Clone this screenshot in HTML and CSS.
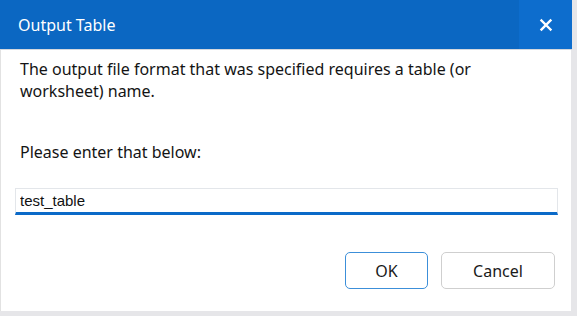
FILE: index.html
```html
<!DOCTYPE html>
<html lang="en">
<head>
  <meta charset="UTF-8" />
  <title>Output Table</title>
  <link rel="stylesheet" href="styles.css">
</head>
<body>
  <div class="dialog">
    <div class="titlebar">
      <span class="title">Output Table</span>
      <a class="close" title="Close">
        <svg width="14" height="14" viewBox="0 0 14 14">
          <path d="M2.5 2.5 L11.5 11.5 M11.5 2.5 L2.5 11.5" stroke="#fff" stroke-width="2.4" stroke-linecap="square" />
        </svg>
      </a>
    </div>
    <div class="content">
      <p class="msg">The output file format that was specified requires a table (or worksheet) name.</p>
      <p class="msg prompt">Please enter that below:</p>
      <input class="name-input" type="text" value="test_table">
      <div class="buttons">
        <button class="btn default">OK</button>
        <button class="btn cancel">Cancel</button>
      </div>
    </div>
  </div>
</body>
</html>
```

FILE: styles.css
```css
html, body {
  margin: 0;
  padding: 0;
  background: #e6e6e9;
  font-family: 'Noto Sans', 'Open Sans', sans-serif;
  color: #1a1a1a;
}
.dialog {
  width: 571px;
  height: 311px;
  background: #fff;
  border-left: 1px solid #e2e2e2;
  box-sizing: border-box;
  display: flex;
  flex-direction: column;
}
.titlebar {
  height: 49px;
  background: #0b67c2;
  display: flex;
  align-items: stretch;
  border-bottom: 1px solid #d4d8de;
  margin-left: -1px;
  width: 572px;
}
.title {
  flex: 1;
  color: #fff;
  font-size: 16px;
  padding-left: 18px;
  display: flex;
  align-items: center;
}
.close {
  width: 53px;
  background: #0d6dcd;
  display: flex;
  align-items: center;
  justify-content: center;
}
.content {
  padding: 8px 14px 0 14px;
  display: flex;
  flex-direction: column;
}
.msg {
  margin: 0;
  padding-left: 5px;
  padding-right: 40px;
  font-size: 16px;
  line-height: 22px;
  color: #141414;
}
.prompt {
  margin-top: 39px;
}
.name-input {
  margin-top: 25px;
  width: 543px;
  height: 27px;
  box-sizing: border-box;
  border: 1px solid #e3e6ea;
  border-bottom: 3px solid #0b6ac8;
  padding: 0 4px;
  font-family: 'Liberation Sans', Arial, sans-serif;
  font-size: 15px;
  color: #111;
  outline: none;
}
.buttons {
  margin-top: 37px;
  display: flex;
  justify-content: flex-end;
  gap: 13px;
  padding-right: 2px;
}
.btn {
  height: 37px;
  background: #fff;
  border: 1px solid #cfcfcf;
  border-radius: 5px;
  font-family: 'Noto Sans', 'Open Sans', sans-serif;
  font-size: 16px;
  color: #1a1a1a;
}
.btn.default {
  width: 83px;
  border-color: #3c8fd9;
}
.btn.cancel {
  width: 114px;
}
```
